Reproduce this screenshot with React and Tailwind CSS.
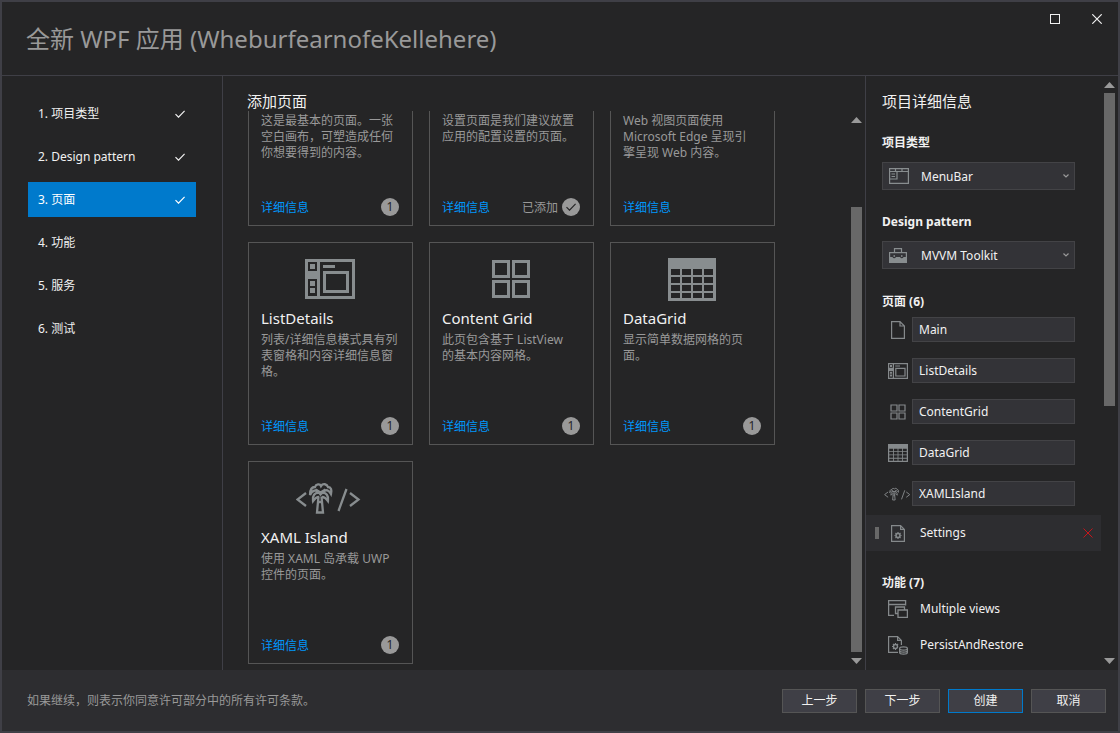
const STEPS = [
  { label: '1. 项目类型', done: true },
  { label: '2. Design pattern', done: true },
  { label: '3. 页面', done: true, active: true },
  { label: '4. 功能' },
  { label: '5. 服务' },
  { label: '6. 测试' },
];

const PAGES = [
  { id: 'blank', text: '这是最基本的页面。一张空白画布，可塑造成任何你想要得到的内容。', count: 1 },
  { id: 'settings', text: '设置页面是我们建议放置应用的配置设置的页面。', added: true },
  { id: 'web', text: 'Web 视图页面使用\nMicrosoft Edge 呈现引\n擎呈现 Web 内容。' },
  {
    id: 'list',
    title: 'ListDetails',
    text: '列表/详细信息模式具有列表窗格和内容详细信息窗格。',
    count: 1,
    icon: <ListDetailsIcon className="h-10 w-[50px]" />,
  },
  {
    id: 'content',
    title: 'Content Grid',
    text: '此页包含基于 ListView\n的基本内容网格。',
    count: 1,
    icon: <ContentGridIcon className="h-10 w-10" />,
  },
  {
    id: 'data',
    title: 'DataGrid',
    text: '显示简单数据网格的页面。',
    count: 1,
    icon: <DataGridIcon className="h-[43px] w-12" />,
  },
  {
    id: 'xaml',
    title: 'XAML Island',
    text: '使用 XAML 岛承载 UWP 控件的页面。',
    count: 1,
    icon: <XamlIslandIcon className="h-8 w-[68px]" />,
  },
];

const SELECTED_PAGES = [
  { name: 'Main', icon: <FileIcon className="h-[18px] w-[14px]" /> },
  { name: 'ListDetails', icon: <ListDetailsIcon className="h-4 w-5" /> },
  { name: 'ContentGrid', icon: <ContentGridIcon className="h-4 w-4" /> },
  { name: 'DataGrid', icon: <DataGridIcon className="h-[18px] w-5" /> },
  { name: 'XAMLIsland', icon: <XamlIslandIcon className="h-[14px] w-7" /> },
];

const FEATURES = [
  { name: 'Multiple views', icon: <WindowsIcon /> },
  { name: 'PersistAndRestore', icon: <FileStoreIcon /> },
];

function ListDetailsIcon({ className }) {
  return (
    <svg viewBox="0 0 50 40" className={className} fill="currentColor" aria-hidden="true">
      <path
        fillRule="evenodd"
        d="M0 0h50v40H0zM3 3v9h9V3zM3 20v17h9V20zM15 3v34h32V3z"
      />
      <path d="M5 5h5v5H5zM5 22h5v5H5zM5 29h5v5H5zM18 6h12v3H18z" />
      <path fillRule="evenodd" d="M18 12h26v22H18zM21 15v16h20V15z" />
    </svg>
  );
}

function ContentGridIcon({ className }) {
  return (
    <svg viewBox="0 0 40 40" className={className} fill="none" stroke="currentColor" strokeWidth="3" aria-hidden="true">
      <path d="M2.500 2.500h15v15h-15zM22.500 2.500h15v15h-15zM2.500 22.500h15v15h-15zM22.500 22.500h15v15h-15z" />
    </svg>
  );
}

function DataGridIcon({ className }) {
  return (
    <svg viewBox="0 0 48 43" className={className} fill="currentColor" aria-hidden="true">
      <path
        fillRule="evenodd"
        d="M0 0h48v43H0zM3 11v6h9v-6zM14 11v6h9v-6zM25 11v6h9v-6zM36 11v6h9v-6zM3 19v6h9v-6zM14 19v6h9v-6zM25 19v6h9v-6zM36 19v6h9v-6zM3 27v6h9v-6zM14 27v6h9v-6zM25 27v6h9v-6zM36 27v6h9v-6zM3 35v5h9v-5zM14 35v5h9v-5zM25 35v5h9v-5zM36 35v5h9v-5z"
      />
    </svg>
  );
}

function XamlIslandIcon({ className }) {
  return (
    <svg viewBox="0 0 68 32" className={className} fill="none" stroke="currentColor" strokeWidth="2.300" aria-hidden="true">
      <path d="M10 11L1.500 17.500l8.500 6.500M54 11l8.500 6.500L54 24M50.500 7l-8 22" />
      <g transform="translate(-2)">
        <path d="M25 11c-2-4-7-3-9 2 0-5 1-8 5-8 1-3 5-3.500 6-1 2-3 6-2 7 1 3 0 4 3 3 7-2-4-5-5-8-2" />
        <path d="M25 11c-4-1-7 3-6 8 2-3 4-4 6-4M28 11c4-1 7 3 6 8-2-3-4-4-6-4M21.500 7.500l5 3 5-3M24.500 9.500l2 3 3-3" />
        <path d="M24.500 14.500l-1.500 16h6l-1.500-16M25 20h3" />
      </g>
    </svg>
  );
}

function FileIcon({ className }) {
  return (
    <svg viewBox="0 0 14 18" className={className} fill="none" stroke="currentColor" strokeWidth="1.200" aria-hidden="true">
      <path d="M.6.6h8.400l4.400 4.400v12.400H.6zM9 .6V5h4.400" />
    </svg>
  );
}

function FileGearIcon() {
  return (
    <svg viewBox="0 0 14 17" className="h-[17px] w-[14px]" fill="none" stroke="currentColor" strokeWidth="1.200" aria-hidden="true">
      <path d="M.6.6h9l3.800 3.800v12H.6zM9.600.6v3.800h3.800" />
      <circle cx="7" cy="10.500" r="2" strokeWidth="1.600" />
      <path d="M7 7v1M7 13v1M3.500 10.500h1M9.500 10.500h1M4.500 8l1 1M8.500 12l1 1M9.500 8l-1 1M5.500 12l-1 1" />
    </svg>
  );
}

function FileStoreIcon() {
  return (
    <svg viewBox="0 0 20 19" className="h-[19px] w-5" fill="none" stroke="currentColor" strokeWidth="1.200" aria-hidden="true">
      <path d="M10 16.400H.6V.6h9l3.800 3.800V9M9.600.6v3.800h3.800" />
      <circle cx="7.500" cy="10.500" r="2" strokeWidth="1.400" />
      <path d="M7.500 7v1.500M7.500 12.500V14M4 10.500h1.500M5 8l1 1M9 9l1-1M5 13l1-1" />
      <ellipse cx="15.500" cy="12.500" rx="3.900" ry="1.600" />
      <path d="M11.600 12.500v4c0 2.200 7.800 2.200 7.800 0v-4M11.600 14.500c0 2.200 7.800 2.200 7.800 0" />
    </svg>
  );
}

function WindowsIcon() {
  return (
    <svg viewBox="0 0 20 18" className="h-[18px] w-5" fill="none" stroke="currentColor" strokeWidth="1.300" aria-hidden="true">
      <path d="M6 15.400H.6V.6h17v5M.6 4.500h17" />
      <path d="M10 13.500H7.500v-6.500h9v2.500M10 10h9.400v7.400H10z" />
    </svg>
  );
}

function MenuBarIcon() {
  return (
    <svg viewBox="0 0 20 16" className="h-4 w-5" fill="none" stroke="currentColor" strokeWidth="1.200" aria-hidden="true">
      <path d="M.6.6h18.800v14.800H.6zM.6 3.500h18.800M6.500.6v2.900M13 .6v2.900M8 3.500v7.500H.6M2.500 6h3.500M2.500 8.500h3.500" />
    </svg>
  );
}

function ToolboxIcon() {
  return (
    <svg viewBox="0 0 18 15" className="h-[15px] w-[18px]" fill="none" stroke="currentColor" strokeWidth="1.200" aria-hidden="true">
      <path d="M5.500 4V.6h7V4M.6 10V4.600h16.800V10" />
      <path d="M0 9h3.500a1.800 1.800 0 0 0 3.400 0h4.200a1.800 1.800 0 0 0 3.400 0H18V15H0z" fill="currentColor" stroke="none" />
      <path d="M5.200 7v2M12.800 7v2" />
    </svg>
  );
}

function Check({ className }) {
  return (
    <svg viewBox="0 0 10 8" className={className} fill="none" stroke="currentColor" strokeWidth="1.200" aria-hidden="true">
      <path d="M.5 4.200L3.500 7.200 9.600.8" />
    </svg>
  );
}

function ScrollBar({ className, thumb }) {
  return (
    <div className={`flex w-[11px] shrink-0 flex-col items-center text-[#999999] ${className}`} aria-hidden="true">
      <svg viewBox="0 0 11 6" className="h-[6px] w-[11px] shrink-0" fill="currentColor">
        <path d="M0 6L5.500 0 11 6z" />
      </svg>
      <div className="flex min-h-0 w-full flex-1 flex-col pt-[5px] pb-[6px]">
        <div className={`w-full bg-[#686868] ${thumb}`} />
      </div>
      <svg viewBox="0 0 11 6" className="h-[6px] w-[11px] shrink-0" fill="currentColor">
        <path d="M0 0l5.500 6L11 0z" />
      </svg>
    </div>
  );
}

function PageCard({ page }) {
  return (
    <article className="flex h-[203px] flex-col border border-[#555555] pr-[13px] pb-[9px] pl-3">
      <div className="flex h-[65px] shrink-0 items-center justify-center pt-[7px] text-[#888d8f]">{page.icon}</div>
      <h3 className="h-5 shrink-0 text-[15px] leading-5 text-[#f1f1f1]">{page.title}</h3>
      <p className="mt-1 text-xs leading-4 whitespace-pre-line text-[#999999]">{page.text}</p>
      <div className="mt-auto flex h-[18px] items-end justify-between">
        <a href="#details" className="text-xs leading-4 text-[#0097fb]">
          详细信息
        </a>
        {page.added && (
          <span className="flex items-end gap-1 text-xs leading-4 text-[#999999]">
            已添加
            <span className="flex h-[18px] w-[18px] items-center justify-center rounded-full bg-[#999999] text-[#252526]">
              <Check className="h-2 w-[10px]" />
            </span>
          </span>
        )}
        {page.count && (
          <span className="flex h-[18px] w-[18px] items-center justify-center rounded-full bg-[#999999] text-xs text-[#252526]">
            {page.count}
          </span>
        )}
      </div>
    </article>
  );
}

function SelectField({ id, label, value, icon }) {
  return (
    <div className="mt-6 mr-[26px] ml-4">
      <label htmlFor={id} className="block text-xs leading-4 font-bold">
        {label}
      </label>
      <div className="mt-[11px] grid h-7 items-center">
        <select
          id={id}
          defaultValue={value}
          className="col-start-1 row-start-1 h-7 w-full appearance-none border border-[#434346] bg-[#333337] pt-px pl-[38px] text-xs"
        >
          <option value={value}>{value}</option>
        </select>
        <span className="pointer-events-none col-start-1 row-start-1 ml-[7px] text-[#888d8f]">{icon}</span>
        <svg
          viewBox="0 0 6 4"
          className="pointer-events-none col-start-1 row-start-1 mr-[6px] h-1 w-[6px] justify-self-end text-[#999999]"
          fill="none"
          stroke="currentColor"
          strokeWidth="1.200"
        >
          <path d="M.5.5L3 3 5.500.5" />
        </svg>
      </div>
    </div>
  );
}

function FooterButton({ primary, children }) {
  return (
    <button
      type="button"
      className={`h-6 w-[75px] border bg-[#3f3f46] text-xs ${primary ? 'border-[#007acc]' : 'border-[#555555]'}`}
    >
      {children}
    </button>
  );
}

export default function App() {
  return (
    <div
      lang="zh-CN"
      className="flex h-screen flex-col border-2 border-[#3f3f46] bg-[#252526] font-['Noto_Sans','Noto_Sans_CJK_SC',sans-serif] text-[#f1f1f1]"
    >
      <header className="flex h-[74px] shrink-0 items-start justify-between border-b border-[#3f3f46]">
        <h1 className="pt-[21px] pl-6 text-2xl leading-8 text-[#999999]">全新 WPF 应用 (WheburfearnofeKellehere)</h1>
        <div className="flex">
          <button type="button" aria-label="最大化" className="flex h-[34px] w-[42px] items-center justify-center">
            <span className="h-[10px] w-[10px] border border-[#f1f1f1]" />
          </button>
          <button type="button" aria-label="关闭" className="flex h-[34px] w-[42px] items-center justify-center">
            <svg viewBox="0 0 10 10" className="h-[10px] w-[10px]" stroke="currentColor" strokeWidth="1.200">
              <path d="M.3.3l9.400 9.400M9.700.3L.3 9.700" />
            </svg>
          </button>
        </div>
      </header>

      <div className="flex min-h-0 flex-1">
        <nav className="flex w-[221px] shrink-0 flex-col gap-2 border-r border-[#3f3f46] px-[26px] pt-5">
          {STEPS.map((step) => (
            <button
              key={step.label}
              type="button"
              className={`flex h-[35px] items-center justify-between pr-[11px] pl-[10px] text-xs ${
                step.active ? 'bg-[#007acc] text-white' : ''
              }`}
            >
              {step.label}
              {step.done && <Check className="h-2 w-[10px]" />}
            </button>
          ))}
        </nav>

        <main className="flex min-w-0 flex-1 flex-col pt-[15px]">
          <h2 className="pl-6 text-[15px] leading-5">添加页面</h2>
          <div className="flex min-h-0 flex-1">
            {/* scrolled to the end, the first row runs out at the top */}
            <div className="flex min-w-0 flex-1 flex-col justify-end overflow-hidden pb-[6px] pl-[25px]">
              <div className="grid grid-cols-[repeat(auto-fill,165px)] gap-4">
                {PAGES.map((page) => (
                  <PageCard key={page.id} page={page} />
                ))}
              </div>
            </div>
            <ScrollBar className="mr-[3px] pt-[6px] pb-[6px]" thumb="mt-auto h-[85%]" />
          </div>
        </main>

        <aside className="flex w-[253px] shrink-0 border-l border-[#3f3f46]">
          <div className="min-w-0 flex-1 overflow-hidden pt-[15px]">
            <h2 className="pl-4 text-[15px] leading-5">项目详细信息</h2>
            <SelectField id="type" label="项目类型" value="MenuBar" icon={<MenuBarIcon />} />
            <SelectField id="pattern" label="Design pattern" value="MVVM Toolkit" icon={<ToolboxIcon />} />

            <h3 className="mt-[25px] pl-4 text-xs leading-4 font-bold">页面 (6)</h3>
            <ul className="mt-[7px] flex flex-col gap-4 pr-[26px] pl-[17px]">
              {SELECTED_PAGES.map((page) => (
                <li key={page.name} className="flex items-center">
                  <span className="flex w-[29px] shrink-0 justify-center text-[#85898b]">{page.icon}</span>
                  <input
                    type="text"
                    aria-label={page.name}
                    defaultValue={page.name}
                    className="h-[25px] min-w-0 flex-1 border border-[#434346] bg-[#333337] px-[6px] text-xs"
                  />
                </li>
              ))}
            </ul>
            <div className="mt-[9px] flex h-9 items-center bg-[#2d2d30] pr-2 pl-[9px] text-xs">
              <span className="h-3 w-1 bg-[#686868]" />
              <span className="ml-1 flex w-[29px] justify-center text-[#85898b]">
                <FileGearIcon />
              </span>
              <span className="ml-2 flex-1">Settings</span>
              <button type="button" aria-label="删除 Settings" className="text-[#c5151b]">
                <svg viewBox="0 0 10 10" className="h-[10px] w-[10px]" stroke="currentColor">
                  <path d="M.5.5l9 9M9.500.5l-9 9" />
                </svg>
              </button>
            </div>

            <h3 className="mt-6 pl-4 text-xs leading-4 font-bold">功能 (7)</h3>
            <ul className="pl-[17px] text-xs">
              {FEATURES.map((feature) => (
                <li key={feature.name} className="flex h-9 items-center">
                  <span className="flex w-[29px] justify-center text-[#85898b]">{feature.icon}</span>
                  <span className="ml-2">{feature.name}</span>
                </li>
              ))}
            </ul>
          </div>
          <ScrollBar className="mr-[3px] ml-[3px] pt-[6px] pb-[6px]" thumb="h-[56%]" />
        </aside>
      </div>

      <footer className="flex h-[61px] shrink-0 items-center justify-between bg-[#2d2d30] pr-3 pl-[25px]">
        <p className="text-xs text-[#999999]">如果继续，则表示你同意许可部分中的所有许可条款。</p>
        <div className="flex gap-2">
          <FooterButton>上一步</FooterButton>
          <FooterButton>下一步</FooterButton>
          <FooterButton primary>创建</FooterButton>
          <FooterButton>取消</FooterButton>
        </div>
      </footer>
    </div>
  );
}
